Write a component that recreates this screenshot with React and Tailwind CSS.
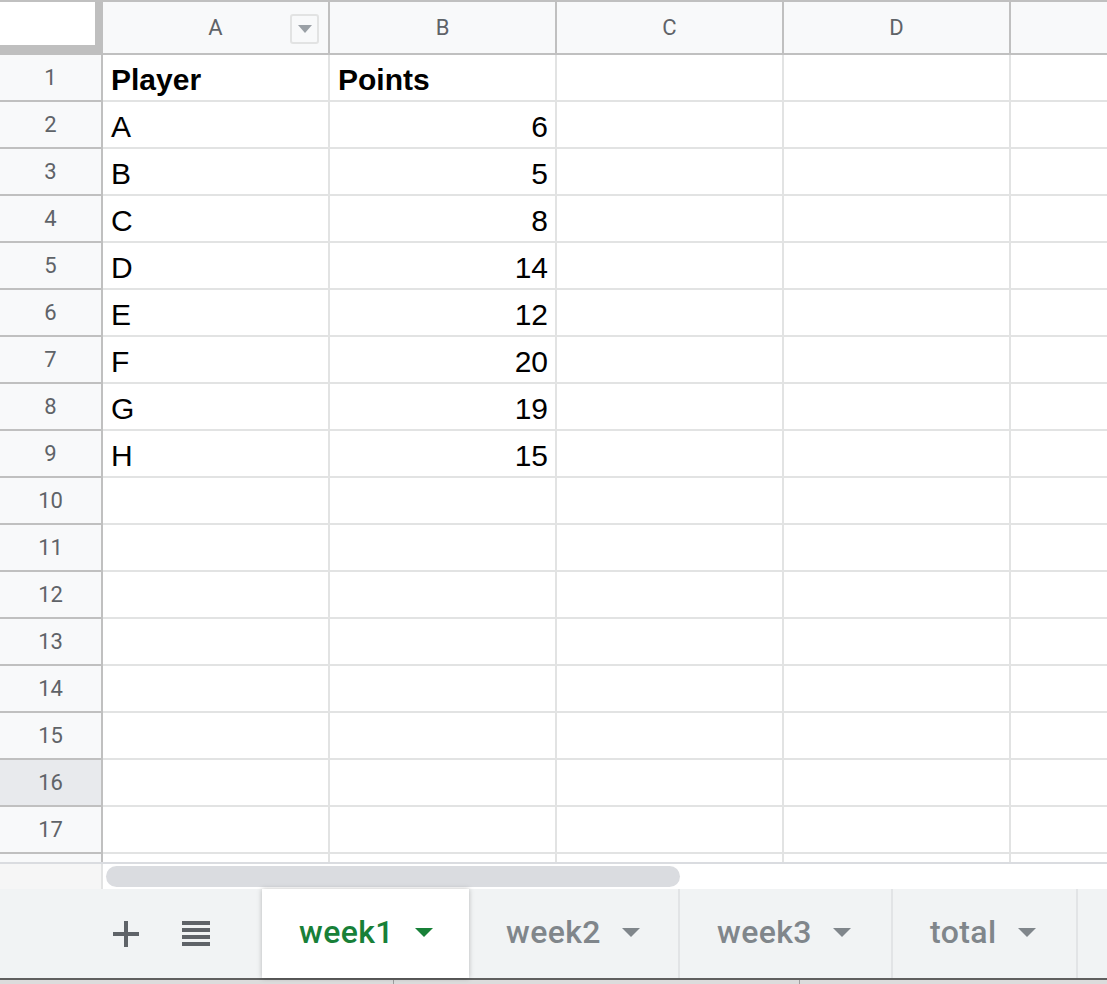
import React from "react";

const rows = [
  ["Player", "Points"],
  ["A", "6"],
  ["B", "5"],
  ["C", "8"],
  ["D", "14"],
  ["E", "12"],
  ["F", "20"],
  ["G", "19"],
  ["H", "15"],
];

const cols = ["A", "B", "C", "D"];
const tabs = ["week1", "week2", "week3", "total"];

function FilterButton() {
  return (
    <div className="absolute right-[9px] top-[12px] w-[29px] h-[30px] border-2 border-[#e2e3e3] rounded-[3px] bg-[#f8f9fa] flex items-center justify-center">
      <div className="w-0 h-0 border-x-[7px] border-x-transparent border-t-[8px] border-t-[#9aa0a6]" />
    </div>
  );
}

function Triangle({ active }) {
  return (
    <div
      className={
        active
          ? "w-0 h-0 border-x-[9px] border-x-transparent border-t-[9px] border-t-[#188038]"
          : "w-0 h-0 border-x-[9px] border-x-transparent border-t-[9px] border-t-[#80868b]"
      }
    />
  );
}

export default function App() {
  const body = [];
  for (let i = 0; i < 17; i++) body.push(rows[i] || ["", ""]);

  return (
    <div className="w-[1107px] h-[984px] overflow-hidden bg-white flex flex-col font-['Liberation_Sans',Arial,sans-serif]">
      {/* column headers */}
      <div className="grid grid-cols-[103px_227px_227px_227px_227px_1fr] h-[55px] shrink-0 border-t-2 border-[#c0c0c0] font-['Roboto',sans-serif] text-[22px] text-[#5f6368]">
        <div className="bg-white border-r-[8px] border-b-[10px] border-[#bfbfbf]" />
        {cols.map((c, i) => (
          <div
            key={c}
            className="relative bg-[#f8f9fa] border-r-2 border-b-2 border-[#c0c0c0] flex items-center justify-center"
          >
            {c}
            {i === 0 && <FilterButton />}
          </div>
        ))}
        <div className="bg-[#f8f9fa] border-b-2 border-[#c0c0c0]" />
      </div>

      {/* rows */}
      {body.map((r, i) => (
        <div key={i} className="grid grid-cols-[103px_227px_227px_227px_227px_1fr] h-[47px] shrink-0">
          <div
            className={`${i === 15 ? "bg-[#e8eaed]" : "bg-[#f8f9fa]"} border-r-2 border-b-2 border-[#c0c0c0] flex items-center justify-center font-['Roboto',sans-serif] text-[22px] text-[#5f6368]`}
          >
            {i + 1}
          </div>
          <div
            className={`border-r-2 border-b-2 border-[#e2e3e3] flex items-end pb-[2px] pl-[8px] text-[30px] leading-[36px] text-black ${i === 0 ? "font-bold" : ""}`}
          >
            {r[0]}
          </div>
          <div
            className={`border-r-2 border-b-2 border-[#e2e3e3] flex items-end pb-[2px] pr-[7px] text-[30px] leading-[36px] text-black ${i === 0 ? "font-bold justify-start pl-[8px]" : "justify-end"}`}
          >
            {r[1]}
          </div>
          <div className="border-r-2 border-b-2 border-[#e2e3e3]" />
          <div className="border-r-2 border-b-2 border-[#e2e3e3]" />
          <div className="border-b-2 border-[#e2e3e3]" />
        </div>
      ))}

      {/* partial row 18 */}
      <div className="grid grid-cols-[103px_227px_227px_227px_227px_1fr] h-[8px] shrink-0">
        <div className="bg-[#f8f9fa] border-r-2 border-[#c0c0c0]" />
        <div className="border-r-2 border-[#e2e3e3]" />
        <div className="border-r-2 border-[#e2e3e3]" />
        <div className="border-r-2 border-[#e2e3e3]" />
        <div className="border-r-2 border-[#e2e3e3]" />
        <div />
      </div>
      <div className="h-[2px] shrink-0 bg-[#dadce0]" />

      {/* horizontal scrollbar */}
      <div className="h-[25px] shrink-0 flex">
        <div className="w-[103px] bg-[#f6f6f6] border-r-2 border-[#e2e3e3]" />
        <div className="flex-1 bg-white pl-[3px] py-[2px]">
          <div className="w-[574px] h-[21px] rounded-full bg-[#dadce0]" />
        </div>
      </div>

      {/* sheet tabs */}
      <div className="h-[89px] shrink-0 bg-[#f1f3f4] flex items-stretch font-['Roboto',sans-serif] font-medium text-[32px] tracking-[0.4px]">
        <div className="w-[262px] flex items-center">
          <div className="ml-[113px] w-[26px] h-[26px] relative">
            <div className="absolute left-0 top-[11px] w-[26px] h-[4px] bg-[#5f6368]" />
            <div className="absolute left-[11px] top-0 w-[4px] h-[26px] bg-[#5f6368]" />
          </div>
          <div className="ml-[43px] w-[28px] flex flex-col gap-[3px]">
            <div className="h-[4px] bg-[#5f6368]" />
            <div className="h-[4px] bg-[#5f6368]" />
            <div className="h-[4px] bg-[#5f6368]" />
            <div className="h-[4px] bg-[#5f6368]" />
          </div>
        </div>
        {tabs.map((t, i) => {
          const active = i === 0;
          const widths = ["w-[207px]", "w-[211px]", "w-[213px]", "w-[185px]"];
          return (
            <div
              key={t}
              className={`${widths[i]} flex items-center pl-[37px] gap-[21px] pb-[3px] ${
                active
                  ? "bg-white text-[#188038] shadow-[0_0_5px_rgba(0,0,0,0.25)] relative z-10"
                  : "text-[#80868b] border-r-2 border-[#e2e4e6]"
              }`}
            >
              <span className="leading-none">{t}</span>
              <Triangle active={active} />
            </div>
          );
        })}
      </div>

      {/* window bottom edge */}
      <div className="h-[2px] shrink-0 bg-[#5f5f5f]" />
      <div className="flex-1 flex bg-[#dcdcdc]">
        <div className="w-[394px] border-r border-[#9e9e9e]" />
        <div className="w-[406px] border-r border-[#9e9e9e]" />
        <div className="flex-1" />
      </div>
    </div>
  );
}
